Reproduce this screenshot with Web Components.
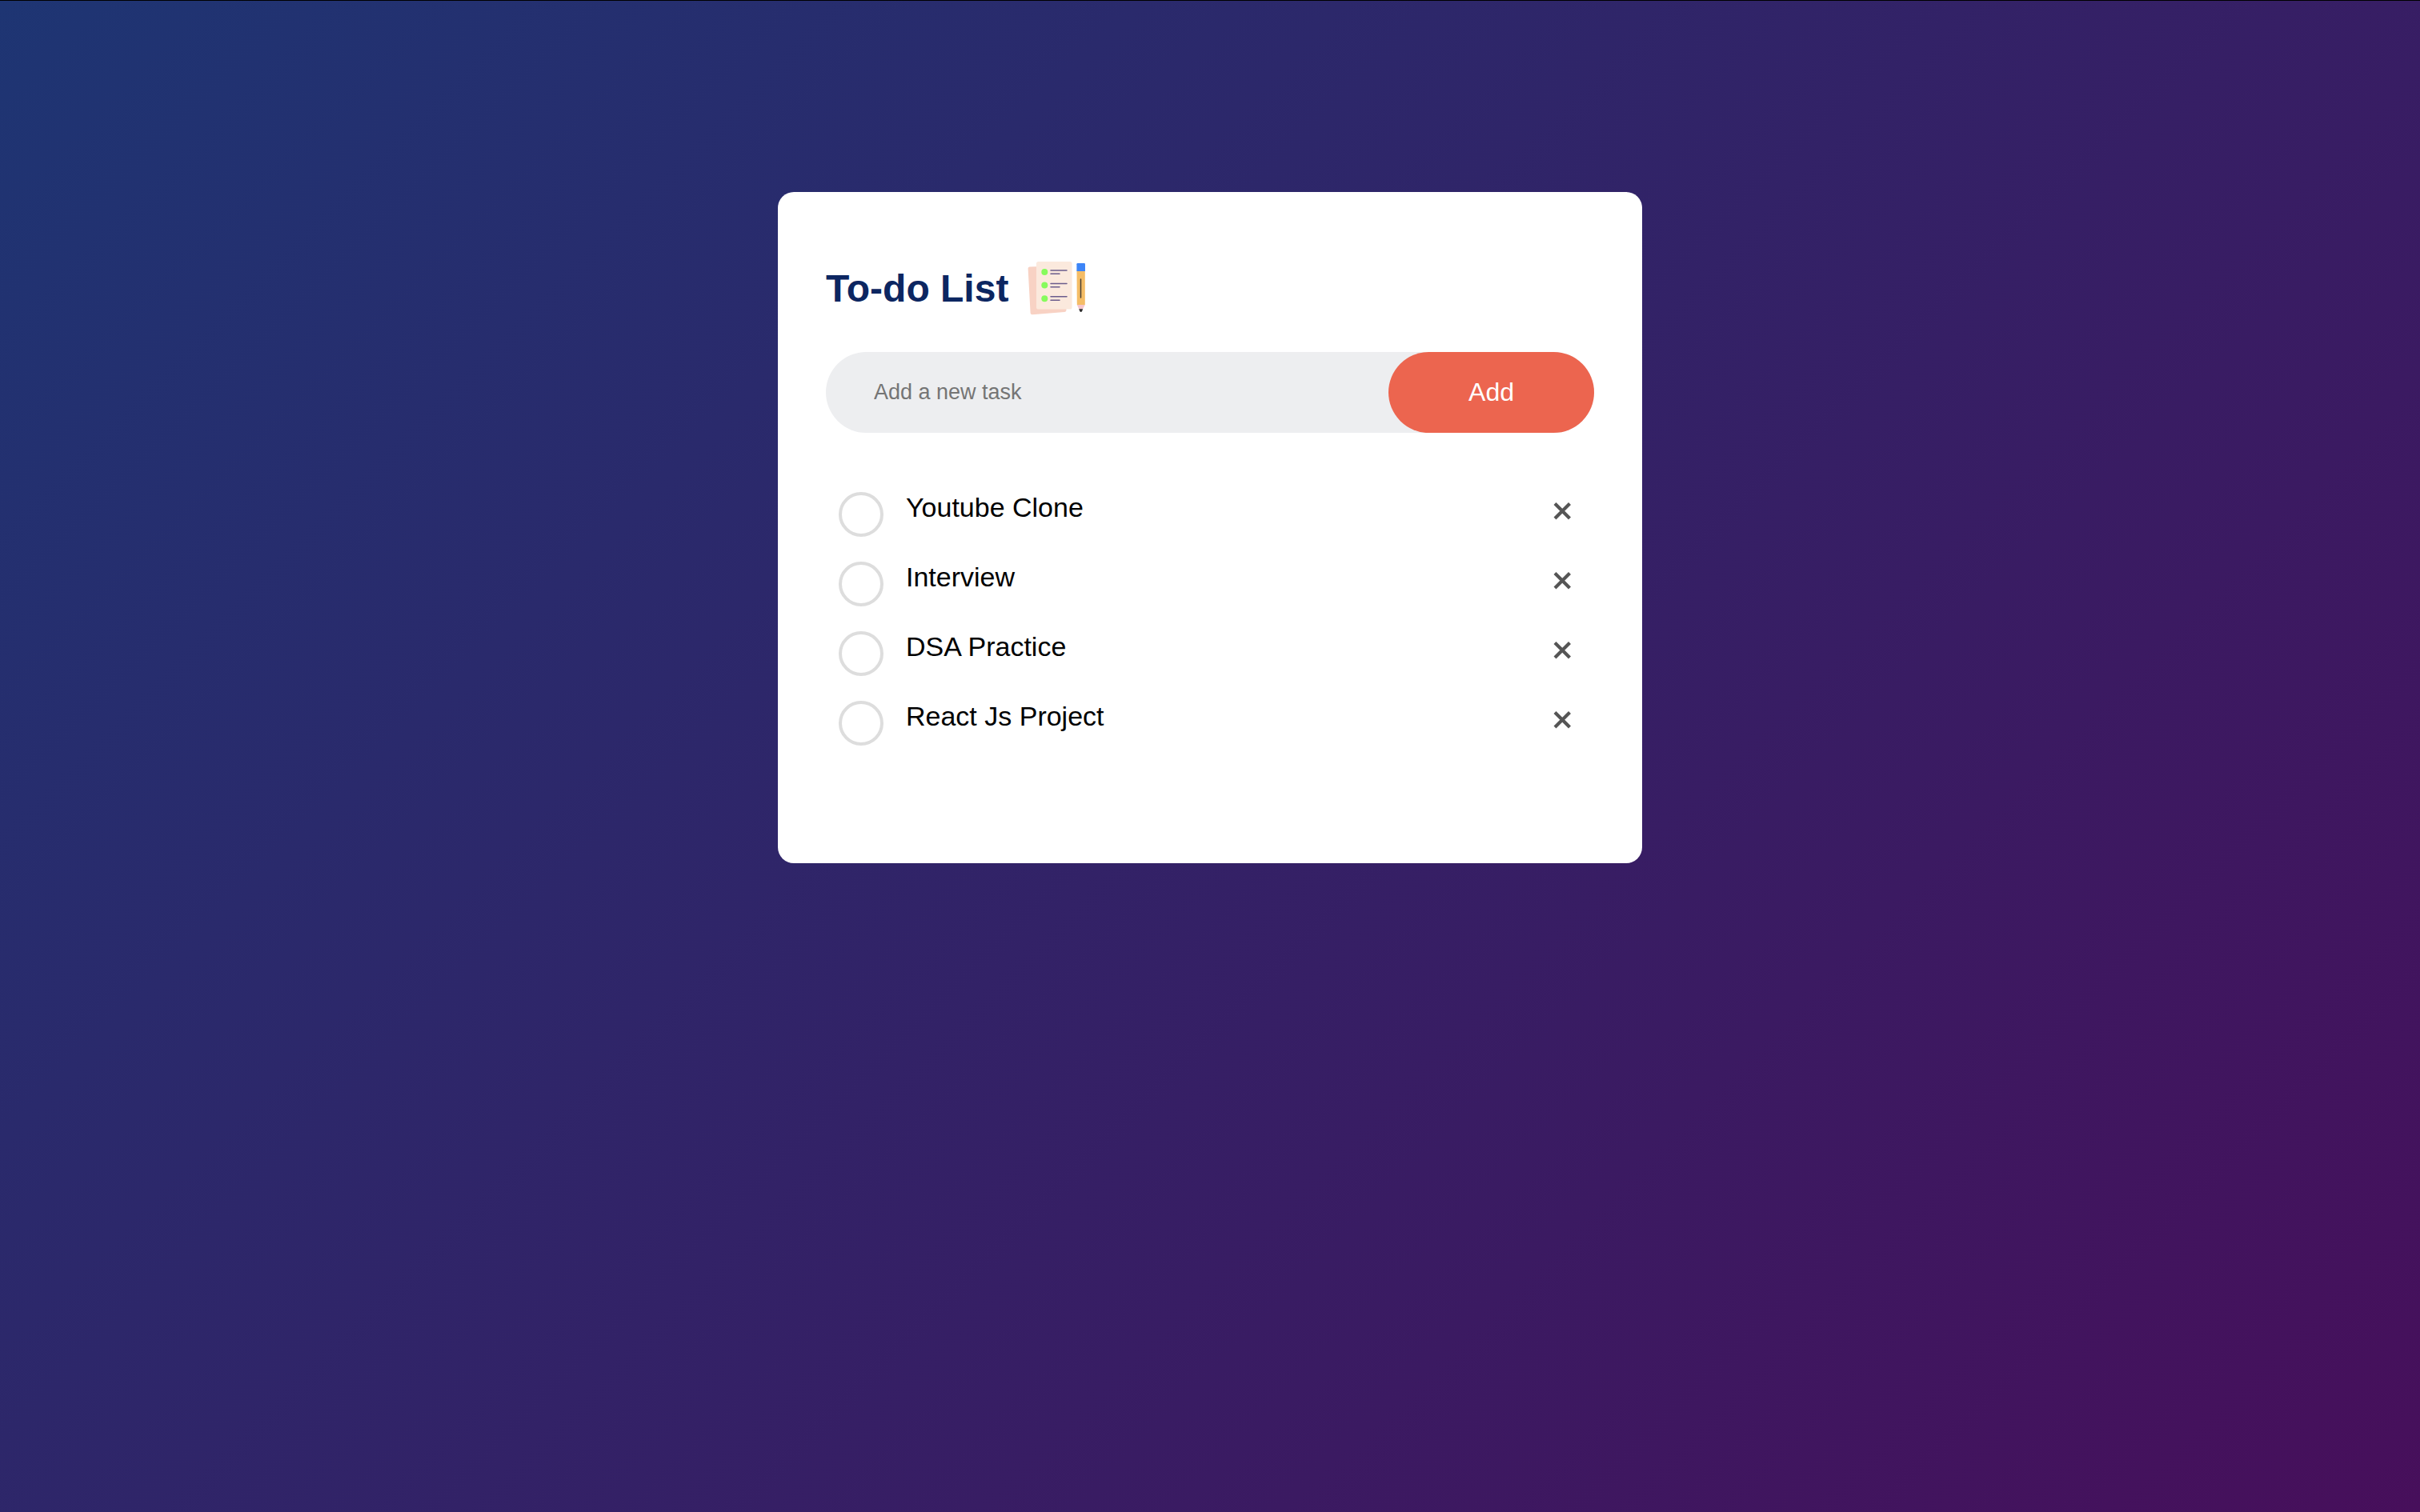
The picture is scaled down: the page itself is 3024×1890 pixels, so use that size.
<!DOCTYPE html>
<html lang="en">
<head>
<meta charset="utf-8">
<meta name="viewport" content="width=device-width, initial-scale=1">
<title>To-do List</title>
<style>
  html { background: #000; }
  body {
    margin: 0;
    font-family: "Liberation Sans", Arial, Helvetica, sans-serif;
  }
</style>
</head>
<body>
<todo-app>
  <todo-card>
    <todo-heading slot="heading">To-do List</todo-heading>
    <todo-form slot="form" placeholder="Add a new task">Add</todo-form>
    <todo-item>Youtube Clone</todo-item>
    <todo-item>Interview</todo-item>
    <todo-item>DSA Practice</todo-item>
    <todo-item>React Js Project</todo-item>
  </todo-card>
</todo-app>

<script>
  const define = (name, html) => {
    const template = document.createElement('template');
    template.innerHTML = html;
    customElements.define(name, class extends HTMLElement {
      constructor() {
        super();
        this.attachShadow({ mode: 'open' }).append(template.content.cloneNode(true));
      }
      connectedCallback() {
        const input = this.shadowRoot.querySelector('input[type="text"]');
        if (input) input.placeholder = this.getAttribute('placeholder') || '';
      }
    });
  };

  define('todo-app', `
    <style>
      :host {
        display: flex;
        justify-content: center;
        align-items: flex-start;
        box-sizing: border-box;
        min-height: 100vh;
        padding: 239px 20px 40px;
        border-top: 1px solid #000;
        background: linear-gradient(135deg, #1e3573, #470f5b) padding-box;
      }
    </style>
    <slot></slot>
  `);

  define('todo-card', `
    <style>
      :host {
        display: flex;
        flex-direction: column;
        box-sizing: border-box;
        width: 100%;
        max-width: 1080px;
        padding: 80px 60px 140px;
        border-radius: 20px;
        background: #fff;
      }
      header { margin-bottom: 40px; }
      .form { margin-bottom: 50px; }
    </style>
    <header><slot name="heading"></slot></header>
    <div class="form"><slot name="form"></slot></div>
    <div role="list"><slot></slot></div>
  `);

  define('todo-heading', `
    <style>
      :host { display: block; }
      h2 {
        display: flex;
        align-items: center;
        gap: 20px;
        margin: 0;
        color: #0c2661;
        font-size: 48px;
        line-height: 57px;
      }
      svg { display: block; width: 80px; height: 80px; }
    </style>
    <h2>
      <span><slot></slot></span>
      <svg viewBox="0 0 80 80" aria-hidden="true">
        <path fill="#f8d2c4" d="M6.6 13.4 50 12l2.5 55.5q.1 2.3-2.2 2.5L10 73.3q-2.2.1-2.4-2.1L4.6 15.6q-.1-2 2-2.2z"/>
        <rect x="15" y="7" width="44.6" height="59.6" rx="2.6" fill="#fbe9dd"/>
        <g fill="#86fb5c">
          <circle cx="25.3" cy="20" r="4"/>
          <circle cx="25.3" cy="36.6" r="4"/>
          <circle cx="25.3" cy="53.2" r="4"/>
        </g>
        <g stroke="#6b5c8c" stroke-width="1.5" stroke-linecap="round">
          <path d="M33 18h20M33 22.3h11M33 34.5h20M33 38.7h11M33 50.8h20M33 55.3h11"/>
        </g>
        <path fill="#f5bd66" d="M65.5 18.5h10.3V61H65.8z"/>
        <path fill="#3d85f7" d="M66.6 9h8.2q1.2 0 1.2 1.2V19H65.4v-8.8q0-1.2 1.2-1.2z"/>
        <path fill="#f6c5cb" d="M65.8 61h10l-2.8 5.6h-4.6z"/>
        <path fill="#2b2b2b" d="M68.2 66.2h5l-1.2 3q-1.3 1.4-2.6 0z"/>
        <path stroke="#4a4034" stroke-width="1.5" stroke-linecap="round" d="M70.5 29v23"/>
      </svg>
    </h2>
  `);

  define('todo-form', `
    <style>
      :host { display: block; }
      form {
        display: flex;
        border-radius: 60px;
        background: #edeef0;
      }
      input, button {
        margin: 0;
        border: 0;
        outline: 0;
        font-family: inherit;
      }
      input {
        flex: 1;
        min-width: 0;
        padding: 0 20px 0 60px;
        background: transparent;
        font-size: 27px;
      }
      input::placeholder { color: #757575; opacity: 1; }
      button {
        padding: 32px 100px;
        border-radius: 60px;
        background: #ec654f;
        color: #fff;
        font-size: 32px;
        line-height: 37px;
        cursor: pointer;
      }
    </style>
    <form onsubmit="return false">
      <input type="text" aria-label="New task">
      <button type="submit"><slot></slot></button>
    </form>
  `);

  define('todo-item', `
    <style>
      :host { display: block; }
      .row {
        display: flex;
        align-items: flex-start;
        padding-left: 16px;
      }
      label {
        display: flex;
        flex: 1;
        align-items: flex-start;
        gap: 28px;
        color: #000;
        font-size: 34px;
        line-height: 39px;
        cursor: pointer;
      }
      input {
        flex: none;
        appearance: none;
        box-sizing: border-box;
        width: 56px;
        height: 56px;
        margin: 24px 0 0;
        border: 4px solid #ddd;
        border-radius: 50%;
      }
      input:checked { border-color: #ec654f; background: #ec654f; }
      input:checked + span { color: #555; text-decoration: line-through; }
      span { padding: 24px 0; }
      button {
        display: flex;
        flex: none;
        justify-content: center;
        width: 80px;
        margin: 0;
        padding: 36px 0 27px;
        border: 0;
        background: none;
        color: #555;
        cursor: pointer;
      }
      svg { display: block; width: 24px; height: 24px; }
    </style>
    <div class="row" role="listitem">
      <label><input type="checkbox"><span><slot></slot></span></label>
      <button type="button" aria-label="Delete task">
        <svg viewBox="0 0 24 24" aria-hidden="true">
          <path d="M3 2.500 21.500 21M21.500 2.500 3 21" stroke="currentColor" stroke-width="4.200"/>
        </svg>
      </button>
    </div>
  `);
</script>
</body>
</html>
